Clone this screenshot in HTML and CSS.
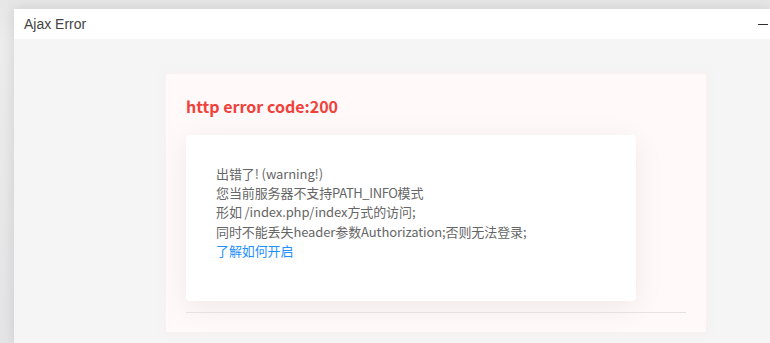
FILE: index.html
```html
<!DOCTYPE html>
<html lang="zh-CN">
<head>
<meta charset="utf-8">
<title>Ajax Error</title>
<link rel="stylesheet" href="styles.css">
</head>
<body>
<div class="layer">
  <div class="layer-title">
    <span class="title-text">Ajax Error</span>
    <span class="min-btn"></span>
  </div>
  <div class="layer-body">
    <div class="panel">
      <h2 class="err-code">http error code:200</h2>
      <div class="card">
        <p class="line">出错了! (warning!)</p>
        <p class="line">您当前服务器不支持<span class="latin">PATH_INFO</span>模式</p>
        <p class="line">形如 /index.php/index方式的访问;</p>
        <p class="line">同时不能丢失header参数Authorization;否则无法登录;</p>
        <p class="line"><a class="link" href="#">了解如何开启</a></p>
      </div>
      <div class="divider"></div>
    </div>
  </div>
</div>
</body>
</html>
```
FILE: styles.css
```css
html, body {
  margin: 0;
  padding: 0;
  height: 100%;
  overflow: hidden;
}
body {
  background: linear-gradient(to bottom, #e6e6e6 0, #ececec 40px, #e4e4e6 100%);
  font-family: "Noto Sans CJK SC", "Noto Sans", sans-serif;
  padding: 9px 0 0 14px;
  box-sizing: border-box;
}
.layer {
  background: #f5f5f5;
  height: 334px;
  box-shadow: 0 0 12px rgba(0,0,0,0.12);
}
.layer-title {
  height: 30px;
  background: #fff;
  display: flex;
  align-items: center;
  justify-content: space-between;
  padding: 0 2px 0 10px;
}
.title-text {
  font-family: "Liberation Sans", Arial, sans-serif;
  font-size: 14px;
  color: #444;
}
.min-btn {
  width: 10px;
  height: 1px;
  background: #2e2e2e;
}
.layer-body {
  padding: 35px 0 0 152px;
}
.panel {
  width: 500px;
  height: 218px;
  padding: 20px;
  background: #fff9f9;
  box-shadow: 0 0 6px rgba(255,230,230,0.5);
}
.err-code {
  margin: 0 0 17px;
  font-size: 16px;
  line-height: 24px;
  font-weight: bold;
  color: #f0413a;
}
.card {
  width: 390px;
  height: 96px;
  background: #fff;
  border-radius: 4px;
  padding: 29px 30px 41px;
  box-shadow: 0 6px 30px rgba(0,0,0,0.07);
}
.line {
  margin: 0;
  font-size: 13px;
  line-height: 19.2px;
  color: #666;
  letter-spacing: -0.1px;
}
.latin {
  letter-spacing: -0.4px;
}
.link {
  color: #1e90ff;
  text-decoration: none;
}
.divider {
  margin-top: 11px;
  height: 1px;
  background: #e6e2e2;
}
```
